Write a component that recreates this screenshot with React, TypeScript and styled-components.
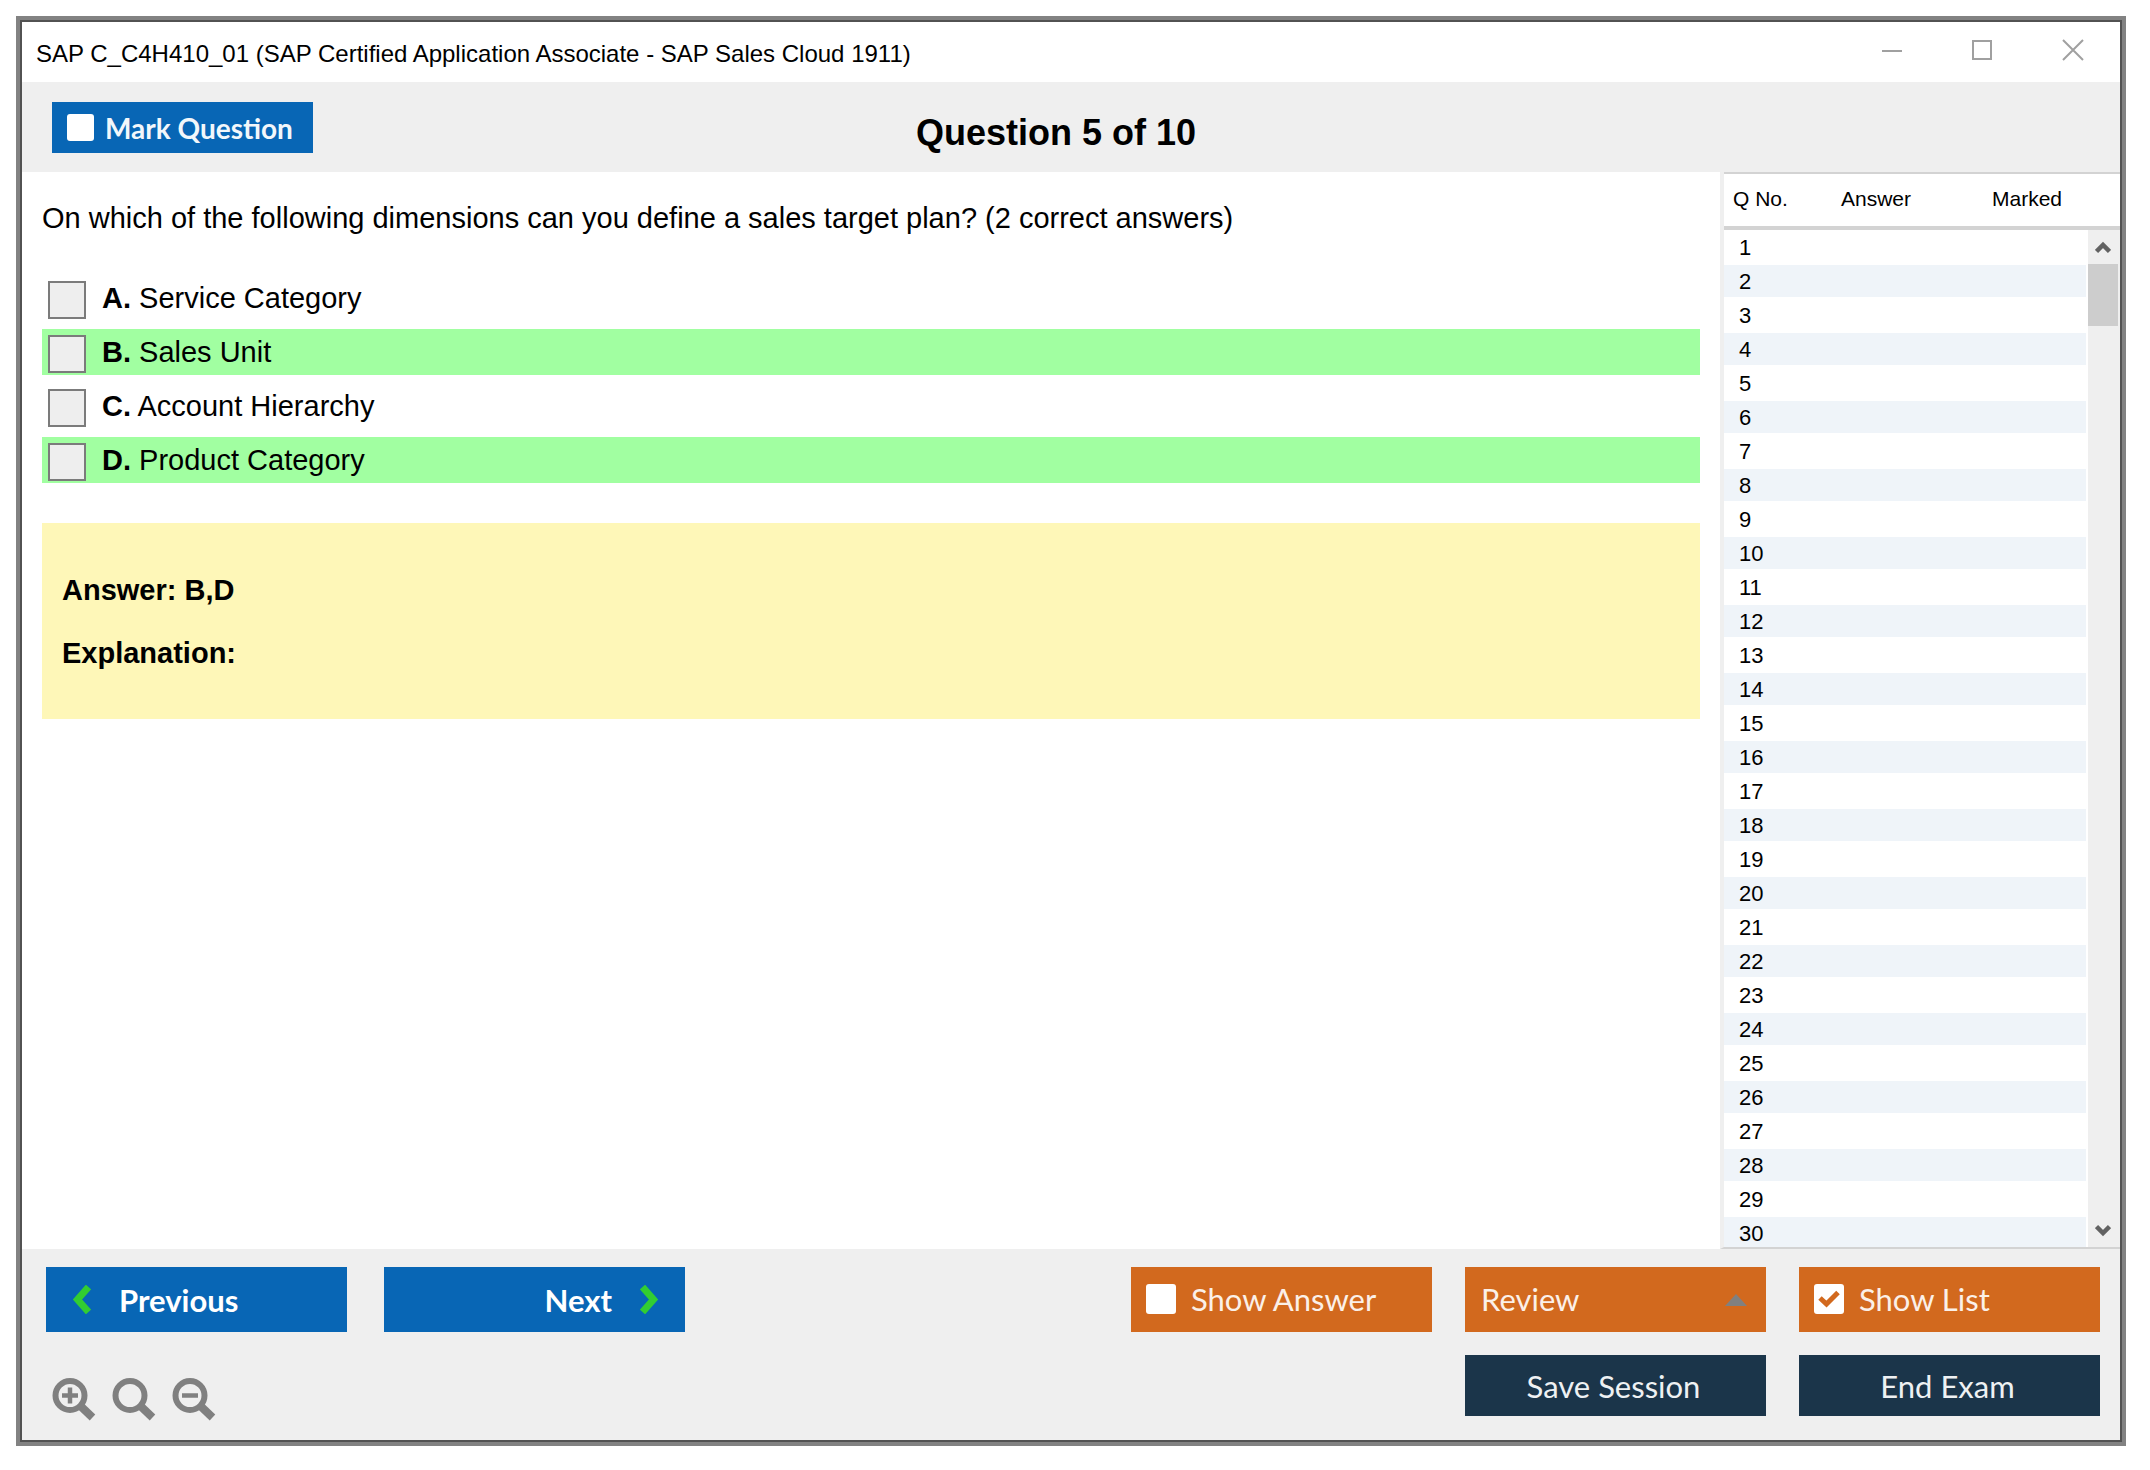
import React from "react";
import styled, { createGlobalStyle } from "styled-components";

const ui = '"Liberation Sans", Arial, sans-serif';
const humanist = 'Lato, Carlito, Calibri, sans-serif';

const GlobalStyle = createGlobalStyle`
  *, *::before, *::after { box-sizing: border-box; }
  body { margin: 0; background: #fff; color: #000; font-family: ${ui}; }
  h1, p { margin: 0; }
  button, input, select { font: inherit; margin: 0; border: 0; padding: 0; border-radius: 0; }
  svg { display: block; }
`;

const Desktop = styled.div`
  display: flex;
  height: 100vh;
  padding: 16px 24px 24px 16px;
`;

const Frame = styled.div`
  display: flex;
  flex: 1;
  min-width: 0;
  border: 4px solid #828282;
`;

const Window = styled.div`
  display: flex;
  flex-direction: column;
  flex: 1;
  min-width: 0;
  border: 2px solid #525252;
  background: #efefef;
`;

const TitleBar = styled.header`
  display: flex;
  justify-content: space-between;
  height: 60px;
  padding: 0 2px 0 14px;
  background: #fff;
`;

const Title = styled.p`
  padding-top: 18px;
  font-size: 24px;
  line-height: 28px;
`;

const WindowControls = styled.div`
  display: flex;
`;

const WindowButton = styled.button`
  display: grid;
  place-items: center;
  width: 90px;
  height: 56px;
  background: transparent;
  color: #a0a0a0;
`;

const Toolbar = styled.div`
  display: grid;
  grid-template-columns: 1fr auto 1fr;
  align-items: start;
  height: 90px;
  padding: 20px 60px 0 30px;
`;

const Heading = styled.h1`
  padding-top: 11px;
  font-size: 36px;
  line-height: 40px;
`;

const MarkToggle = styled.label`
  display: flex;
  align-items: center;
  justify-self: start;
  gap: 11px;
  width: 261px;
  height: 51px;
  padding-left: 15px;
  background: #0866b5;
  color: #f2f7fb;
  font-family: ${humanist};
  font-size: 28px;
  font-weight: 700;
  line-height: 34px;
`;

const Workspace = styled.div`
  display: flex;
  flex: 1;
  min-height: 0;
`;

const QuestionPane = styled.main`
  display: flex;
  flex-direction: column;
  gap: 40px;
  flex: 1;
  min-width: 0;
  padding: 29px 20px;
  background: #fff;
  font-size: 29px;
  line-height: 34px;
`;

const Options = styled.div`
  display: flex;
  flex-direction: column;
  gap: 8px;
`;

const Option = styled.label<{ $correct?: boolean }>`
  display: flex;
  align-items: flex-start;
  gap: 16px;
  height: 46px;
  padding: 6px 6px 2px;
  background: ${(p) => (p.$correct ? "#a1ffa1" : "transparent")};
`;

const OptionBox = styled.input`
  appearance: none;
  flex: none;
  width: 38px;
  height: 38px;
  border: 2px solid #7b7b7b;
  background: #eee;
  &:checked { background: #0866b5; }
`;

const Explanation = styled.section`
  display: flex;
  flex-direction: column;
  gap: 29px;
  padding: 50px 20px 49px;
  background: #fef7b8;
  font-weight: 700;
`;

const ListPanel = styled.aside`
  display: flex;
  width: 400px;
  border-left: 4px solid #efefef;
  border-bottom: 2px solid #d3d3d3;
  background: #fff;
`;

const ListScroller = styled.div`
  flex: 1;
  overflow-y: auto;
  scrollbar-width: none;
`;

const ListTable = styled.table`
  width: 100%;
  table-layout: fixed;
  border-collapse: separate;
  border-spacing: 0;
`;

const ListHeadCell = styled.th<{ $width?: number }>`
  position: sticky;
  top: 0;
  width: ${(p) => (p.$width ? `${p.$width}px` : "auto")};
  height: 58px;
  padding: 0 0 3px 9px;
  border-top: 2px solid #d3d3d3;
  border-bottom: 4px solid #d3d3d3;
  background: #fff;
  font-size: 21px;
  font-weight: 400;
  line-height: 24px;
  text-align: left;
  white-space: nowrap;
`;

const ListRow = styled.tr`
  height: 34px;
  &:nth-child(even) td { background: #eff4f9; }
`;

const ListCell = styled.td`
  padding: 2px 0 0 15px;
  border-bottom: 1px solid #fff;
  border-top: 1px solid #fff;
  font-size: 22px;
  line-height: 30px;
`;

const ScrollRail = styled.div`
  display: flex;
  flex-direction: column;
  width: 34px;
  border-top: 2px solid #d3d3d3;
`;

const RailCap = styled.div`
  flex: none;
  height: 56px;
  border-bottom: 4px solid #d3d3d3;
`;

const RailTrack = styled.div`
  display: flex;
  flex-direction: column;
  flex: 1;
  margin-left: 2px;
  padding-right: 2px;
  background: #efefef;
`;

const RailButton = styled.button`
  display: grid;
  place-items: center;
  height: 34px;
  background: transparent;
  color: #626262;
`;

const RailThumb = styled.div`
  height: 62px;
  margin-bottom: auto;
  background: #cdcdcd;
`;

const Footer = styled.footer`
  display: flex;
  justify-content: space-between;
  height: 191px;
  padding: 18px 20px 0 24px;
  font-family: ${humanist};
  font-size: 31px;
  line-height: 36px;
`;

const Navigation = styled.div`
  display: flex;
  flex-direction: column;
  gap: 46px;
`;

const NavRow = styled.div`
  display: flex;
  gap: 37px;
`;

const NavButton = styled.button<{ $end?: boolean }>`
  display: flex;
  align-items: center;
  justify-content: ${(p) => (p.$end ? "flex-end" : "flex-start")};
  gap: 28px;
  width: 301px;
  height: 65px;
  padding: 0 26px;
  background: #0866b5;
  color: #fff;
  font-size: 31px;
  font-weight: 700;
`;

const ZoomRow = styled.div`
  display: flex;
  gap: 16px;
  padding-left: 6px;
`;

const ZoomButton = styled.button`
  width: 44px;
  height: 44px;
  background: transparent;
  color: #808080;
`;

const Actions = styled.div`
  display: grid;
  grid-template-columns: repeat(3, 301px);
  grid-template-rows: 65px 61px;
  gap: 23px 33px;
`;

const ToggleAction = styled.label`
  display: flex;
  align-items: center;
  gap: 15px;
  padding: 0 15px 2px;
  background: #d2691e;
  color: #fbf0e8;
`;

const ReviewField = styled.div`
  display: grid;
  align-items: center;
  background: #d2691e;
  color: #fbf0e8;
  & > * { grid-area: 1 / 1; }
  & > svg { justify-self: end; margin-right: 19px; pointer-events: none; }
`;

const ReviewSelect = styled.select`
  appearance: none;
  width: 100%;
  height: 65px;
  padding: 0 16px 2px;
  background: transparent;
  color: inherit;
`;

const SessionButton = styled.button<{ $column: number }>`
  grid-column: ${(p) => p.$column};
  padding-right: 4px;
  background: #1b354a;
  color: #eef1f3;
  text-align: center;
`;

const BoxStack = styled.span<{ $size: number }>`
  display: grid;
  flex: none;
  place-items: center;
  width: ${(p) => p.$size}px;
  height: ${(p) => p.$size}px;
  & > * { grid-area: 1 / 1; }
  & > svg { display: none; pointer-events: none; }
  & > input:checked + svg { display: block; }
`;

const BoxInput = styled.input`
  appearance: none;
  width: 100%;
  height: 100%;
  border-radius: 3px;
  background: #fff;
`;

function TickBox({ size, checked }: { size: number; checked?: boolean }) {
  return (
    <BoxStack $size={size}>
      <BoxInput type="checkbox" defaultChecked={checked} />
      <svg width="22" height="18" viewBox="0 0 22 18" fill="none" stroke="#d2691e" strokeWidth="5">
        <path d="M2 8l6.5 6L20 2.5" />
      </svg>
    </BoxStack>
  );
}

function Magnifier({ mark }: { mark?: "plus" | "minus" }) {
  return (
    <svg width="44" height="44" viewBox="0 0 44 44" fill="none" stroke="currentColor">
      <circle cx="18" cy="17.5" r="14.5" strokeWidth="6" />
      <path d="M28.5 28l12 11.5" strokeWidth="8" />
      {mark && <path d="M10 17.5h16" strokeWidth="4.5" />}
      {mark === "plus" && <path d="M18 9.5v16" strokeWidth="4.5" />}
    </svg>
  );
}

function Chevron({ direction }: { direction: "left" | "right" }) {
  return (
    <svg width="19" height="29" viewBox="0 0 19 29" fill="none" stroke="#32cd32" strokeWidth="7">
      <path d={direction === "left" ? "M16.5 2L5.5 14.5 16.5 27" : "M2.5 2L13.5 14.5 2.5 27"} />
    </svg>
  );
}

function RailArrow({ down }: { down?: boolean }) {
  return (
    <svg width="16" height="13" viewBox="0 0 16 13" fill="none" stroke="currentColor" strokeWidth="4.5">
      <path d={down ? "M1.5 2.5L8 9l6.5-6.5" : "M1.5 10.5L8 4l6.5 6.5"} />
    </svg>
  );
}

const options = [
  { letter: "A", text: "Service Category" },
  { letter: "B", text: "Sales Unit", correct: true },
  { letter: "C", text: "Account Hierarchy" },
  { letter: "D", text: "Product Category", correct: true },
];

const questionNumbers = Array.from({ length: 30 }, (_, i) => i + 1);

export default function App() {
  return (
    <>
      <GlobalStyle />
      <Desktop>
        <Frame>
          <Window>
            <TitleBar>
              <Title>SAP C_C4H410_01 (SAP Certified Application Associate - SAP Sales Cloud 1911)</Title>
              <WindowControls>
                <WindowButton aria-label="Minimize">
                  <svg width="22" height="22" fill="none" stroke="currentColor" strokeWidth="2">
                    <path d="M0 12h20" />
                  </svg>
                </WindowButton>
                <WindowButton aria-label="Maximize">
                  <svg width="22" height="22" fill="none" stroke="currentColor" strokeWidth="2">
                    <rect x="1" y="2" width="18" height="18" />
                  </svg>
                </WindowButton>
                <WindowButton aria-label="Close">
                  <svg width="22" height="22" fill="none" stroke="currentColor" strokeWidth="2">
                    <path d="M1 1l20 20M21 1L1 21" />
                  </svg>
                </WindowButton>
              </WindowControls>
            </TitleBar>

            <Toolbar>
              <MarkToggle>
                <TickBox size={27} />
                Mark Question
              </MarkToggle>
              <Heading>Question 5 of 10</Heading>
            </Toolbar>

            <Workspace>
              <QuestionPane>
                <p>On which of the following dimensions can you define a sales target plan? (2 correct answers)</p>
                <Options>
                  {options.map((o) => (
                    <Option key={o.letter} $correct={o.correct}>
                      <OptionBox type="checkbox" />
                      <span>
                        <b>{o.letter}.</b> {o.text}
                      </span>
                    </Option>
                  ))}
                </Options>
                <Explanation>
                  <p>Answer: B,D</p>
                  <p>Explanation:</p>
                </Explanation>
              </QuestionPane>

              <ListPanel>
                <ListScroller>
                  <ListTable>
                    <thead>
                      <tr>
                        <ListHeadCell $width={108}>Q No.</ListHeadCell>
                        <ListHeadCell $width={151}>Answer</ListHeadCell>
                        <ListHeadCell>Marked</ListHeadCell>
                      </tr>
                    </thead>
                    <tbody>
                      {questionNumbers.map((n) => (
                        <ListRow key={n}>
                          <ListCell>{n}</ListCell>
                          <ListCell />
                          <ListCell />
                        </ListRow>
                      ))}
                    </tbody>
                  </ListTable>
                </ListScroller>
                <ScrollRail>
                  <RailCap />
                  <RailTrack>
                    <RailButton aria-label="Scroll up">
                      <RailArrow />
                    </RailButton>
                    <RailThumb />
                    <RailButton aria-label="Scroll down">
                      <RailArrow down />
                    </RailButton>
                  </RailTrack>
                </ScrollRail>
              </ListPanel>
            </Workspace>

            <Footer>
              <Navigation>
                <NavRow>
                  <NavButton>
                    <Chevron direction="left" />
                    Previous
                  </NavButton>
                  <NavButton $end>
                    Next
                    <Chevron direction="right" />
                  </NavButton>
                </NavRow>
                <ZoomRow>
                  <ZoomButton aria-label="Zoom in">
                    <Magnifier mark="plus" />
                  </ZoomButton>
                  <ZoomButton aria-label="Reset zoom">
                    <Magnifier />
                  </ZoomButton>
                  <ZoomButton aria-label="Zoom out">
                    <Magnifier mark="minus" />
                  </ZoomButton>
                </ZoomRow>
              </Navigation>
              <Actions>
                <ToggleAction>
                  <TickBox size={30} />
                  Show Answer
                </ToggleAction>
                <ReviewField>
                  <ReviewSelect aria-label="Review">
                    <option>Review</option>
                  </ReviewSelect>
                  <svg width="22" height="12" viewBox="0 0 22 12" fill="#808080">
                    <path d="M11 0l11 12H0z" />
                  </svg>
                </ReviewField>
                <ToggleAction>
                  <TickBox size={30} checked />
                  Show List
                </ToggleAction>
                <SessionButton $column={2}>Save Session</SessionButton>
                <SessionButton $column={3}>End Exam</SessionButton>
              </Actions>
            </Footer>
          </Window>
        </Frame>
      </Desktop>
    </>
  );
}
